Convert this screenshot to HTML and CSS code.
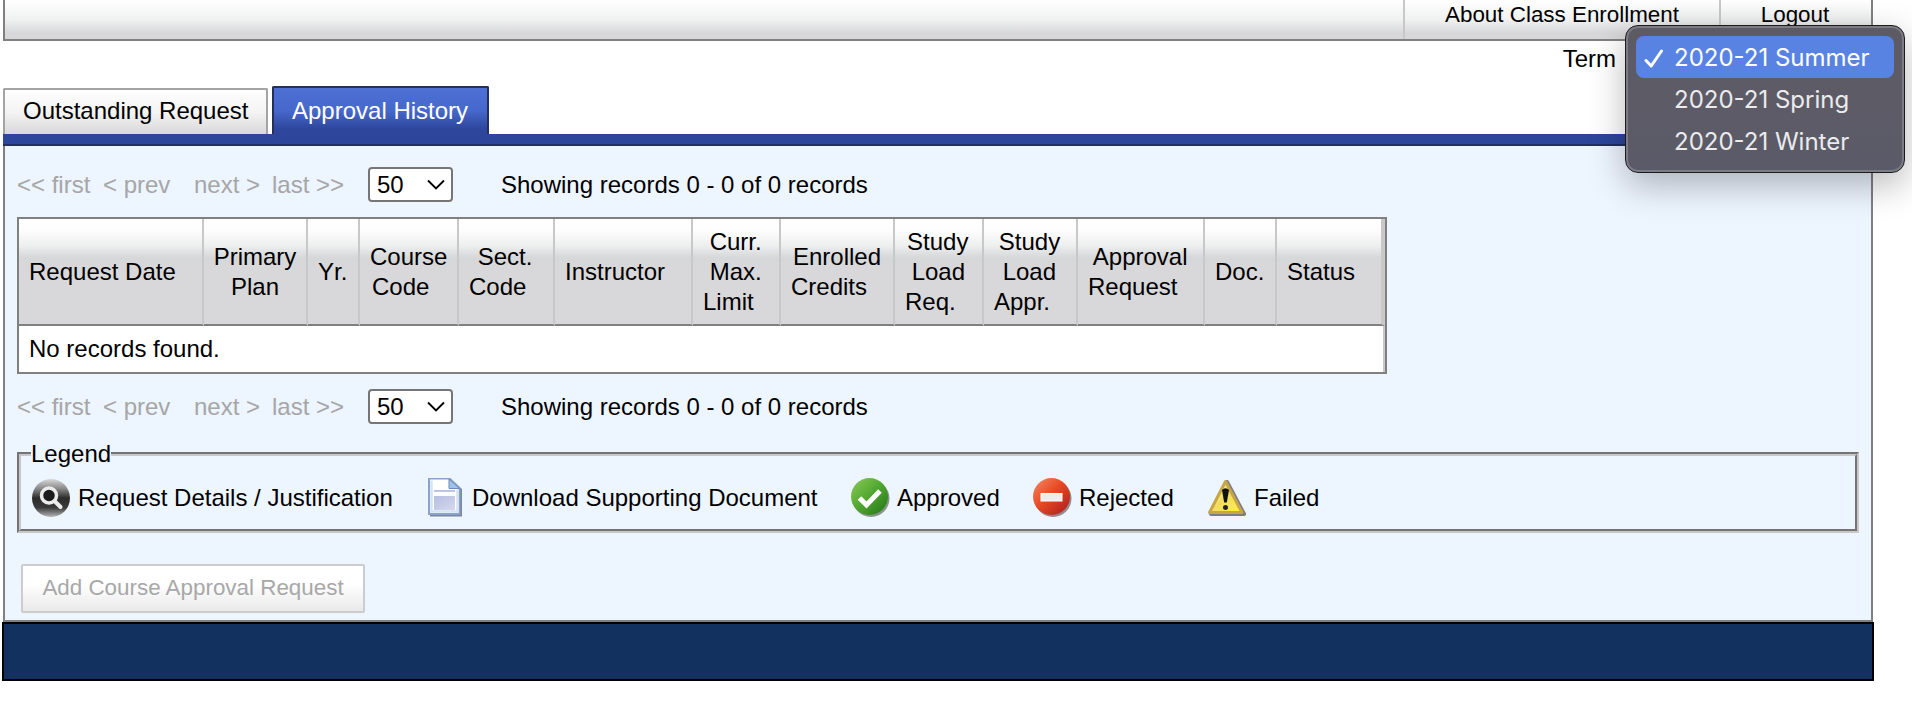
FILE: index.html
```html
<!DOCTYPE html>
<html lang="en">
<head>
    <meta charset="UTF-8">
    <meta name="viewport" content="width=device-width, initial-scale=1.0">
    <title>Class Enrollment</title>
    <link rel="stylesheet" href="styles.css">
</head>
<body>
    <div class="page">
        <div class="top-bar">
            <a class="top-link about">About Class Enrollment</a>
            <a class="top-link logout">Logout</a>
        </div>

        <div class="term-row">
            <label>Term</label>
            <div class="term-select">
                <ul class="term-menu">
                    <li class="selected">
                        <svg class="tick" width="20" height="20" viewBox="0 0 20 20"><path d="M2 11.5 L7.2 17 L17.5 2" fill="none" stroke="#fff" stroke-width="3" stroke-linecap="round" stroke-linejoin="round"/></svg>
                        2020-21 Summer
                    </li>
                    <li>2020-21 Spring</li>
                    <li>2020-21 Winter</li>
                </ul>
            </div>
        </div>

        <div class="tabs">
            <a class="tab outstanding">Outstanding Request</a>
            <a class="tab history active">Approval History</a>
        </div>

        <div class="panel">
            <div class="pager">
                <span class="first">&lt;&lt; first</span>
                <span class="prev">&lt; prev</span>
                <span class="next">next &gt;</span>
                <span class="last">last &gt;&gt;</span>
                <div class="page-size">50<svg width="18" height="12" viewBox="0 0 18 12"><path d="M1 1.5 L9 9.5 L17 1.5" fill="none" stroke="#000" stroke-width="1.8"/></svg></div>
                <span class="showing">Showing records 0 - 0 of 0 records</span>
            </div>

            <table class="records">
                <colgroup>
                    <col class="c-date"><col class="c-plan"><col class="c-yr"><col class="c-course"><col class="c-sect"><col class="c-instr"><col class="c-limit"><col class="c-credits"><col class="c-req"><col class="c-appr"><col class="c-approval"><col class="c-doc"><col class="c-status">
                </colgroup>
                <thead>
                    <tr>
                        <th>Request Date</th>
                        <th class="center">Primary<br>Plan</th>
                        <th>Yr.</th>
                        <th>Course<br>&hairsp;Code</th>
                        <th>&nbsp;&hairsp;Sect.<br>Code</th>
                        <th>Instructor</th>
                        <th>&nbsp;Curr.<br>&nbsp;Max.<br>Limit</th>
                        <th>&hairsp;Enrolled<br>Credits</th>
                        <th>&hairsp;Study<br>&nbsp;Load<br>Req.</th>
                        <th>&thinsp;Study<br>&nbsp;&hairsp;Load<br>Appr.</th>
                        <th>&thinsp;Approval<br>Request</th>
                        <th>Doc.</th>
                        <th>Status</th>
                    </tr>
                </thead>
                <tbody>
                    <tr>
                        <td colspan="13">No records found.</td>
                    </tr>
                </tbody>
            </table>

            <div class="pager bottom">
                <span class="first">&lt;&lt; first</span>
                <span class="prev">&lt; prev</span>
                <span class="next">next &gt;</span>
                <span class="last">last &gt;&gt;</span>
                <div class="page-size">50<svg width="18" height="12" viewBox="0 0 18 12"><path d="M1 1.5 L9 9.5 L17 1.5" fill="none" stroke="#000" stroke-width="1.8"/></svg></div>
                <span class="showing">Showing records 0 - 0 of 0 records</span>
            </div>

            <fieldset class="legend">
                <legend>Legend</legend>
                <div class="legend-items">
                    <div class="item details">
                        <svg width="40" height="40" viewBox="0 0 40 40">
                            <defs>
                                <linearGradient id="gDark" x1="0" y1="0" x2="0" y2="1">
                                    <stop offset="0" stop-color="#d8d8d8"/>
                                    <stop offset=".25" stop-color="#8a8a8a"/>
                                    <stop offset=".5" stop-color="#2c2c2c"/>
                                    <stop offset=".75" stop-color="#3a3a3a"/>
                                    <stop offset="1" stop-color="#b5b5b5"/>
                                </linearGradient>
                            </defs>
                            <circle cx="20" cy="20" r="19" fill="url(#gDark)"/>
                            <circle cx="18" cy="17.500" r="7.500" fill="#1c1c1c" stroke="#ececec" stroke-width="3.500"/>
                            <path d="M24 23.500 L29.500 29" stroke="#ececec" stroke-width="4" stroke-linecap="round"/>
                        </svg>
                        <span>Request Details / Justification</span>
                    </div>
                    <div class="item download">
                        <svg width="36" height="40" viewBox="0 0 36 40">
                            <defs>
                                <linearGradient id="gLines" x1="0" y1="0" x2="1" y2="1">
                                    <stop offset="0" stop-color="#b4bfe0"/>
                                    <stop offset="1" stop-color="#d6d8ee"/>
                                </linearGradient>
                            </defs>
                            <path d="M3 2 H24 L35 11 V38.500 H3 Z" fill="#66738f" opacity=".85"/>
                            <path d="M2 .5 H22.500 L32.500 10 V36 H2 Z" fill="#fff" stroke="#8ba3c9" stroke-width="2"/>
                            <path d="M4.500 2.500 V33.500 H30.500 V12" fill="none" stroke="#d5e3f4" stroke-width="2.500"/>
                            <path d="M22 1 V10.500 H32.500 Z" fill="#9ec3ea" stroke="#6f8bb8" stroke-width="1"/>
                            <path d="M7 13 H28" stroke="#bcc6e4" stroke-width="2"/>
                            <rect x="7" y="18" width="21" height="14" fill="url(#gLines)"/>
                        </svg>
                        <span>Download Supporting Document</span>
                    </div>
                    <div class="item approved">
                        <svg width="40" height="40" viewBox="0 0 40 40">
                            <defs>
                                <linearGradient id="gGreen" x1="0" y1="0" x2="1" y2="1">
                                    <stop offset="0" stop-color="#8ccb57"/>
                                    <stop offset=".45" stop-color="#55aa33"/>
                                    <stop offset="1" stop-color="#1f7414"/>
                                </linearGradient>
                            </defs>
                            <circle cx="20" cy="20.500" r="18.500" fill="#5c6b5c" opacity=".7"/>
                            <circle cx="18.500" cy="18.500" r="18.500" fill="url(#gGreen)"/>
                            <path d="M8.500 20 L15.500 27 L29 13" fill="none" stroke="#fff" stroke-width="5"/>
                        </svg>
                        <span>Approved</span>
                    </div>
                    <div class="item rejected">
                        <svg width="40" height="40" viewBox="0 0 40 40">
                            <defs>
                                <linearGradient id="gRed" x1="0" y1="0" x2="1" y2="1">
                                    <stop offset="0" stop-color="#f58a62"/>
                                    <stop offset=".45" stop-color="#e84a25"/>
                                    <stop offset="1" stop-color="#a81a1c"/>
                                </linearGradient>
                            </defs>
                            <circle cx="20" cy="20.500" r="18.500" fill="#6b5c5c" opacity=".7"/>
                            <circle cx="18.500" cy="18.500" r="18.500" fill="url(#gRed)"/>
                            <rect x="8" y="15.500" width="21" height="7.500" fill="#ececec" stroke="#fff" stroke-width="1"/>
                        </svg>
                        <span>Rejected</span>
                    </div>
                    <div class="item failed">
                        <svg width="40" height="40" viewBox="0 0 40 40">
                            <defs>
                                <linearGradient id="gYellow" x1="0" y1="0" x2="1" y2="1">
                                    <stop offset="0" stop-color="#fdf6b0"/>
                                    <stop offset=".5" stop-color="#f2dc62"/>
                                    <stop offset="1" stop-color="#fdf23a"/>
                                </linearGradient>
                            </defs>
                            <path d="M20 4 L37 36 H4 Z" fill="#55555a" stroke="#55555a" stroke-width="4" stroke-linejoin="round" opacity=".75"/>
                            <path d="M18.500 3.500 L35 34.500 H2.500 Z" fill="url(#gYellow)" stroke="#c9a645" stroke-width="3" stroke-linejoin="round"/>
                            <path d="M15 12 Q18.500 8.500 22 12 L19.800 24.500 H17.200 Z" fill="#111"/>
                            <circle cx="18.500" cy="29.500" r="2.500" fill="#222"/>
                        </svg>
                        <span>Failed</span>
                    </div>
                </div>
            </fieldset>

            <button class="add-request" disabled>
                Add Course Approval Request
            </button>
        </div>

        <div class="footer"></div>
    </div>
</body>
</html>
```
FILE: styles.css
```css
* {
    box-sizing: border-box;
}

body {
    margin: 0;
    background: #fff;
    color: #000;
    font-family: "Liberation Sans", Arial, sans-serif;
    font-size: 24px;
    line-height: 30px;
}

.page {
    width: 1872px;
    margin-left: 2px;
}

.top-bar {
    display: flex;
    justify-content: flex-end;
    height: 41px;
    margin: 0 1px;
    border: 2px solid #808080;
    border-top: none;
    background: linear-gradient(#fff 0, #f0f1f1 50%, #d8d8da 85%, #d8d8da 100%);
}

.top-link {
    border-left: 2px solid #c8c8c8;
    font-size: 22.4px;
    text-align: center;
    white-space: nowrap;
}

.about {
    width: 316px;
}

.logout {
    width: 152px;
    padding-right: 2px;
}

/* term selector with its open menu */
.term-row {
    display: flex;
    justify-content: flex-end;
    height: 45px;
    padding-top: 3px;
}

.term-select {
    position: relative;
    width: 258px;
}

.term-menu {
    position: absolute;
    top: -19px;
    left: 9px;
    z-index: 1;
    width: 280px;
    height: 148px;
    margin: 0;
    padding: 8px 8px 0;
    list-style: none;
    border: 1px solid #1b1b1d;
    border-radius: 13px;
    background: linear-gradient(#5c5a63, #5d5b66 50%, #5a5b69);
    box-shadow: inset 0 0 0 2px #7d7c84, 0 12px 36px rgba(0, 0, 0, .28);
    color: #ebebed;
    font-family: Inter, sans-serif;
    font-size: 24px;
}

.term-menu li {
    position: relative;
    height: 42px;
    margin: 0 2px;
    padding-left: 38px;
    line-height: 44px;
    white-space: nowrap;
}

.term-menu .selected {
    margin-top: 2px;
    border-radius: 8px;
    background: #5883e3;
    color: #fff;
}

.tick {
    position: absolute;
    left: 8px;
    top: 13px;
}

.tabs {
    display: flex;
    align-items: flex-end;
    gap: 4px;
    height: 48px;
    margin-left: 1px;
}

.tab {
    height: 46px;
    padding: 6px 0 0 18px;
    border: 2px solid #a4a4a4;
    border-bottom: none;
    border-radius: 2px 2px 0 0;
    background: linear-gradient(#fff, #f4f4f4 50%, #d8d8da);
    white-space: nowrap;
}

.outstanding {
    width: 265px;
}

.history {
    width: 217px;
}

.tab.active {
    height: 48px;
    padding-top: 8px;
    border-color: #25305a;
    background: linear-gradient(#4d70d6, #4668cb 50%, #2d459b 90%);
    color: #fff;
}

.panel {
    height: 488px;
    margin: 0 1px;
    padding: 0 12px;
    border: 2px solid #808080;
    border-top: none;
    background: #edf5ff;
}

/* blue strip under the tabs */
.panel::before {
    content: "";
    display: block;
    height: 10px;
    margin: 0 -14px 21px;
    border-bottom: 2px solid #232f5c;
    background: #2d459b;
}

.pager {
    display: flex;
    align-items: center;
    height: 35px;
    color: #a6a6a6;
    white-space: nowrap;
}

.first {
    width: 86px;
}

.prev {
    width: 91px;
}

.next {
    width: 78px;
}

.last {
    width: 96px;
}

.page-size {
    display: flex;
    align-items: center;
    justify-content: space-between;
    width: 85px;
    height: 35px;
    padding: 0 6px 0 7px;
    border: 2px solid #767676;
    border-radius: 4px;
    background: #fff;
    color: #000;
}

.showing {
    margin-left: 48px;
    color: #000;
}

.records {
    width: 1370px;
    height: 157px;
    margin-top: 15px;
    table-layout: fixed;
    border: 2px solid #808080;
    border-spacing: 0;
    background: #c8c8c8;
}

.c-date { width: 185px; }
.c-plan { width: 104px; }
.c-yr { width: 52px; }
.c-course { width: 99px; }
.c-sect { width: 96px; }
.c-instr { width: 138px; }
.c-limit { width: 88px; }
.c-credits { width: 114px; }
.c-req { width: 89px; }
.c-appr { width: 94px; }
.c-approval { width: 127px; }
.c-doc { width: 72px; }
.c-status { width: 108px; }

.records th {
    height: 107px;
    padding: 0 0 0 10px;
    border-right: 2px solid #c8c8c8;
    border-bottom: 2px solid #808080;
    background: linear-gradient(#fff 0, #fcfcfc 12%, #eeefef 25%, #d6d7d9 37%, #d8d8da 45%, #d8d8da 100%);
    font-weight: normal;
    text-align: left;
    white-space: nowrap;
}

.records th.center {
    padding: 0;
    text-align: center;
}

.records th:last-child {
    border-right-width: 4px;
}

.records td {
    height: 46px;
    padding: 0 10px;
    border-right: 2px solid #c8c8c8;
    background: #fff;
}

.pager.bottom {
    margin-top: 15px;
}

.legend {
    height: 94px;
    margin: 15px 0 0;
    padding: 0 10px;
    border: 4px groove #c8c8c8;
}

.legend legend {
    padding: 0;
}

.legend-items {
    display: flex;
    align-items: center;
    height: 42px;
    margin-top: 8px;
}

.item {
    display: flex;
    align-items: center;
    white-space: nowrap;
}

.item span {
    margin-left: 6px;
}

.details { width: 396px; }
.download { width: 424px; }
.approved { width: 182px; }
.rejected { width: 174px; }

.details span,
.failed span {
    margin-left: 7px;
}

.download span {
    margin-left: 9px;
}

.add-request {
    display: block;
    width: 344px;
    height: 49px;
    margin: 31px 0 0 4px;
    padding: 0 0 2px;
    border: 2px solid #ccc;
    border-radius: 2px;
    background: linear-gradient(#fff, #fff 40%, #e9e9e9);
    color: #a8a8a8;
    font: 22.4px "Liberation Sans", Arial, sans-serif;
}

.footer {
    height: 59px;
    border: 2px solid #000;
    background: #13315f;
}
```
